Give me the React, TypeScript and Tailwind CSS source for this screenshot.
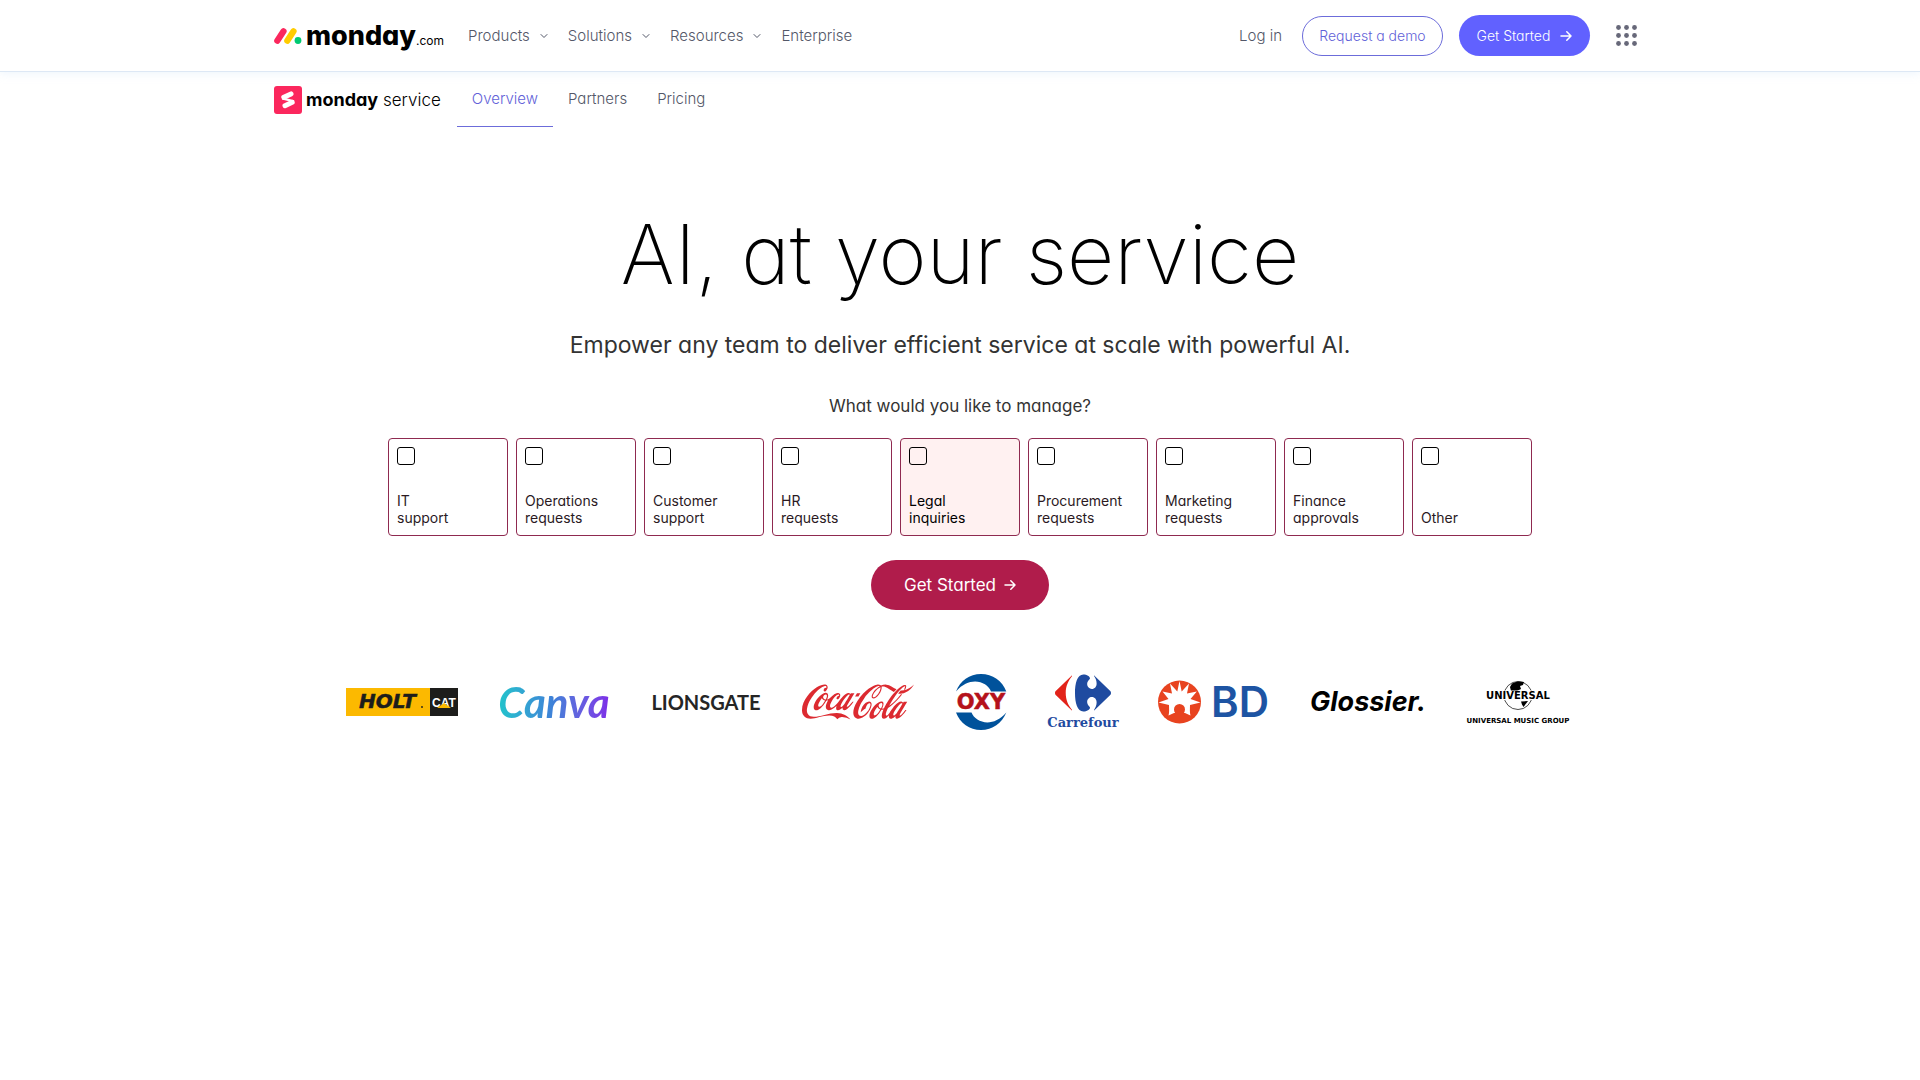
import React, { useState } from "react";
import { ChevronDown } from "lucide-react";
import { SiCocacola, SiCarrefour } from "react-icons/si";

const navItems = [
  { label: "Products", hasMenu: true },
  { label: "Solutions", hasMenu: true },
  { label: "Resources", hasMenu: true },
  { label: "Enterprise", hasMenu: false },
];

const tabs = ["Overview", "Partners", "Pricing"];

const departments = [
  { id: "it", lines: ["IT", "support"] },
  { id: "operations", lines: ["Operations", "requests"] },
  { id: "customer", lines: ["Customer", "support"] },
  { id: "hr", lines: ["HR", "requests"] },
  { id: "legal", lines: ["Legal", "inquiries"] },
  { id: "procurement", lines: ["Procurement", "requests"] },
  { id: "marketing", lines: ["Marketing", "requests"] },
  { id: "finance", lines: ["Finance", "approvals"] },
  { id: "other", lines: ["Other"] },
];

function ArrowIcon() {
  return (
    <svg
      className="h-3 w-3"
      viewBox="0 0 12 12"
      fill="none"
      stroke="currentColor"
      strokeWidth="1.5"
      strokeLinecap="round"
      strokeLinejoin="round"
      aria-hidden="true"
    >
      <path d="M1 6h10M6.8 1.8 11 6l-4.200 4.200" />
    </svg>
  );
}

function MondayLogo() {
  return (
    <a href="#home" className="flex items-center gap-1 text-black">
      <svg className="h-4 w-7" viewBox="0 0 28 16" aria-hidden="true">
        <path d="M3.300 12.700 9.500 3.300" stroke="#fb275d" strokeWidth="6.200" strokeLinecap="round" />
        <path d="M13.300 12.700 19.500 3.300" stroke="#ffcc00" strokeWidth="6.200" strokeLinecap="round" />
        <circle cx="24" cy="12.500" r="3.400" fill="#00ca72" />
      </svg>
      <span className="flex items-baseline">
        <span className="text-[27px] leading-9 font-extrabold">monday</span>
        <span className="text-xs">.com</span>
      </span>
    </a>
  );
}

function ServiceLogo() {
  return (
    <a href="#service" className="flex items-center gap-1 text-black">
      <svg className="h-7 w-7" viewBox="0 0 28 28" aria-hidden="true">
        <rect width="28" height="28" rx="3" fill="#fb275d" />
        <path
          d="M9.800 11.300 17 7.900M11 19.700l7.200-3.400"
          stroke="#fff"
          strokeWidth="5"
          strokeLinecap="round"
        />
        <path d="M8.200 12.300 20 15.300" stroke="#fff" strokeWidth="2.400" />
      </svg>
      <span className="text-[17px] leading-6">
        <span className="text-lg leading-6 font-bold">monday</span>{" "}
        <span className="font-light">service</span>
      </span>
    </a>
  );
}

function Header() {
  return (
    <header className="border-b border-[#dde8f5] shadow-[0_2px_8px_rgba(210,230,250,0.35)]">
      <div className="mx-auto flex h-[71px] max-w-[1372px] items-center justify-between">
        <div className="flex items-center gap-6">
          <MondayLogo />
          <nav className="flex items-center gap-[18px] text-[15px] leading-6 font-light text-[#535768]">
            {navItems.map((item) => (
              <button key={item.label} type="button" className="flex items-center gap-2">
                {item.label}
                {item.hasMenu && <ChevronDown className="h-3 w-3" strokeWidth={2} />}
              </button>
            ))}
          </nav>
        </div>
        <div className="flex items-center">
          <a href="#login" className="mr-5 text-[15px] leading-6 font-light text-[#535768]">
            Log in
          </a>
          <button
            type="button"
            className="mr-4 h-10 w-[141px] rounded-full border border-[#6c6cda] text-sm font-light text-[#6161d8]"
          >
            Request a demo
          </button>
          <button
            type="button"
            className="flex h-[41px] w-[131px] items-center justify-center gap-2.5 rounded-full bg-[#6161ff] text-sm font-light text-white"
          >
            Get Started
            <ArrowIcon />
          </button>
          <button type="button" aria-label="All products" className="ml-4 py-2.5 pr-[9px] pl-2.5">
            <svg className="h-[21px] w-[21px]" viewBox="0 0 21 21" fill="#676879" aria-hidden="true">
              {[2.5, 10.5, 18.5].map((y) =>
                [2.5, 10.5, 18.5].map((x) => <circle key={`${x}-${y}`} cx={x} cy={y} r="2.400" />)
              )}
            </svg>
          </button>
        </div>
      </div>
    </header>
  );
}

function SubNav() {
  return (
    <div className="mx-auto flex h-[55px] w-full max-w-[1372px] gap-4">
      <ServiceLogo />
      <nav className="flex text-[15px] leading-6 font-light text-[#535768]">
        {tabs.map((tab) => (
          <a
            key={tab}
            href="#tab"
            className={
              tab === "Overview"
                ? "flex items-center border-b border-[#6c6cda] px-[15px] text-[#6161d8]"
                : "flex items-center border-b border-transparent px-[15px]"
            }
          >
            {tab}
          </a>
        ))}
      </nav>
    </div>
  );
}

function DepartmentPicker() {
  const [selected, setSelected] = useState<string[]>([]);
  const [hovered, setHovered] = useState("legal");

  const toggle = (id: string) =>
    setSelected((prev) => (prev.includes(id) ? prev.filter((s) => s !== id) : [...prev, id]));

  return (
    <div className="grid w-full max-w-[1144px] grid-cols-9 gap-2">
      {departments.map((department) => (
        <label
          key={department.id}
          onMouseEnter={() => setHovered(department.id)}
          className={`flex h-[98px] cursor-pointer flex-col justify-between rounded border border-[#8f2a50] p-2 pb-[9px] text-sm leading-[17px] ${
            hovered === department.id ? "bg-[#fff1f1] text-black" : "text-[#2b1a1f]"
          }`}
        >
          <input
            type="checkbox"
            checked={selected.includes(department.id)}
            onChange={() => toggle(department.id)}
            className="h-[18px] w-[18px] appearance-none rounded-[3px] border border-black checked:bg-[#b01c4b]"
          />
          <span>
            {department.lines.map((line) => (
              <span key={line} className="block">
                {line}
              </span>
            ))}
          </span>
        </label>
      ))}
    </div>
  );
}

function HoltCatLogo() {
  return (
    <svg className="h-7 w-28" viewBox="0 0 112 28" role="img" aria-label="Holt Cat">
      <rect width="84" height="28" fill="#fcb900" />
      <rect x="84" width="28" height="28" fill="#1d1d1b" />
      <text x="13" y="20" fontFamily="DejaVu Sans" fontWeight="700" fontStyle="italic" fontSize="20" stroke="#1d1d1b" strokeWidth="0.5" fill="#1d1d1b">
        HOLT
      </text>
      <circle cx="76" cy="19" r="0.900" fill="#1d1d1b" />
      <text x="98" y="19" textAnchor="middle" fontFamily="Liberation Sans Narrow, Liberation Sans" fontWeight="700" fontSize="12" fill="#fff">
        CAT
      </text>
      <path d="m91 20 7-5 7 5z" fill="#fcb900" />
    </svg>
  );
}

function OxyLogo() {
  return (
    <svg className="h-14 w-[54px] overflow-visible" viewBox="0 0 54 56" role="img" aria-label="Oxy">
      <path d="M2 17.500C6 7 15.500 0 27 0c11.500 0 21.500 7 25.300 17.500H37C33 7.500 16 1.500 2 17.500z" fill="#00529b" />
      <path d="M52.300 38.500C48 49 38.500 56 27 56 15.500 56 6 49 2 38.500h15.500C21.500 48.500 38.500 54.500 52.300 38.500z" fill="#00529b" />
      <text x="27" y="35" textAnchor="middle" fontFamily="DejaVu Sans" fontWeight="700" fontSize="21" stroke="#b5121b" strokeWidth="0.5" fill="#b5121b">
        OXY
      </text>
    </svg>
  );
}

function CarrefourLogo() {
  return (
    <div className="flex w-[70px] flex-col items-center">
      <svg width="0" height="0" aria-hidden="true">
        <defs>
          <linearGradient id="carrefour">
            <stop offset="0.320" stopColor="#e2231a" />
            <stop offset="0.320" stopColor="#1f4ba0" />
          </linearGradient>
        </defs>
      </svg>
      <SiCarrefour className="-mt-2 -mb-1.5 h-14 w-14 fill-[url(#carrefour)]" />
      <span className="font-['DejaVu_Serif'] text-[13px] leading-4 font-bold text-[#1f4ba0]">
        Carrefour
      </span>
    </div>
  );
}

function BdLogo() {
  return (
    <svg className="h-11 w-28 overflow-visible" viewBox="0 0 112 44" role="img" aria-label="BD">
      <circle cx="21.500" cy="22" r="21.500" fill="#e8431f" />
      <path
        d="M21.500 1 23.700 11.500 31 3.500 29 13.500l9.800-2-6.300 7.500 10 3.500L32 25c0 4-.5 7 .5 10.500L27 33H16l-5.500 2.500c1-3.500.5-6.500.5-10.500L.5 22.500l10-3.500-6-7.500 9.500 2L12 3.500l7.300 8z"
        fill="#fff"
      />
      <circle cx="21.500" cy="29.500" r="5.500" fill="#e8431f" />
      <path d="M17.500 32h8l1 4h-10z" fill="#e8431f" />
      <text x="53" y="37" fontFamily="Inter" fontWeight="600" fontSize="42" fill="#1d54a3">
        BD
      </text>
    </svg>
  );
}

function UniversalLogo() {
  return (
    <svg className="h-11 w-28 overflow-visible" viewBox="0 0 112 44" role="img" aria-label="Universal Music Group">
      <circle cx="56" cy="15.500" r="14" fill="none" stroke="#000" strokeWidth="0.700" />
      <path d="M50 3.500c4-2.500 9-2.500 12-1.500l-1 3-3 1 1 3-4 2h-6l-1-4z" />
      <rect x="23" y="10.500" width="66" height="9.500" fill="#fff" />
      <path d="m59 21.500 7-.5-4.500 6-1.500-2.500z" />
      <text x="56" y="19" textAnchor="middle" fontFamily="DejaVu Sans" fontWeight="700" fontSize="10">
        UNIVERSAL
      </text>
      <text x="56" y="43" textAnchor="middle" fontFamily="DejaVu Sans" fontWeight="700" fontSize="7">
        UNIVERSAL MUSIC GROUP
      </text>
    </svg>
  );
}

function CustomerLogos() {
  return (
    <div className="flex h-14 items-center justify-center gap-10">
      <HoltCatLogo />
      <span className="w-28 bg-linear-to-r from-[#20c4cb] via-[#3f7fd8] to-[#7d2ae8] bg-clip-text text-center font-['Lato'] text-[42px] leading-[48px] font-bold text-transparent italic">
        Canva
      </span>
      <span className="w-28 text-center font-['Lato'] text-xl font-bold text-[#252525]">
        LIONSGATE
      </span>
      <SiCocacola className="h-28 w-28 text-[#dc2a30]" />
      <OxyLogo />
      <CarrefourLogo />
      <BdLogo />
      <span className="w-28 text-center text-[27px] font-bold text-black italic">Glossier.</span>
      <UniversalLogo />
    </div>
  );
}

export default function App() {
  return (
    <div className="min-h-screen bg-white font-['Inter',sans-serif] [font-feature-settings:'cv11']">
      <Header />
      <SubNav />
      <main className="flex flex-col items-center pt-20 text-[#333333]">
        <h1 className="text-[82px] leading-[96px] font-extralight text-black">
          AI, at your service
        </h1>
        <p className="mt-[26px] text-[23px] leading-8">
          Empower any team to deliver efficient service at scale with powerful AI.
        </p>
        <h2 className="mt-[33px] mb-5 text-[17px] leading-6">What would you like to manage?</h2>
        <DepartmentPicker />
        <button
          type="button"
          className="mt-6 mb-16 flex h-[50px] w-[178px] items-center justify-center gap-2 rounded-full bg-[#b01c4b] text-[17px] leading-6 text-white"
        >
          Get Started
          <ArrowIcon />
        </button>
        <CustomerLogos />
      </main>
    </div>
  );
}
